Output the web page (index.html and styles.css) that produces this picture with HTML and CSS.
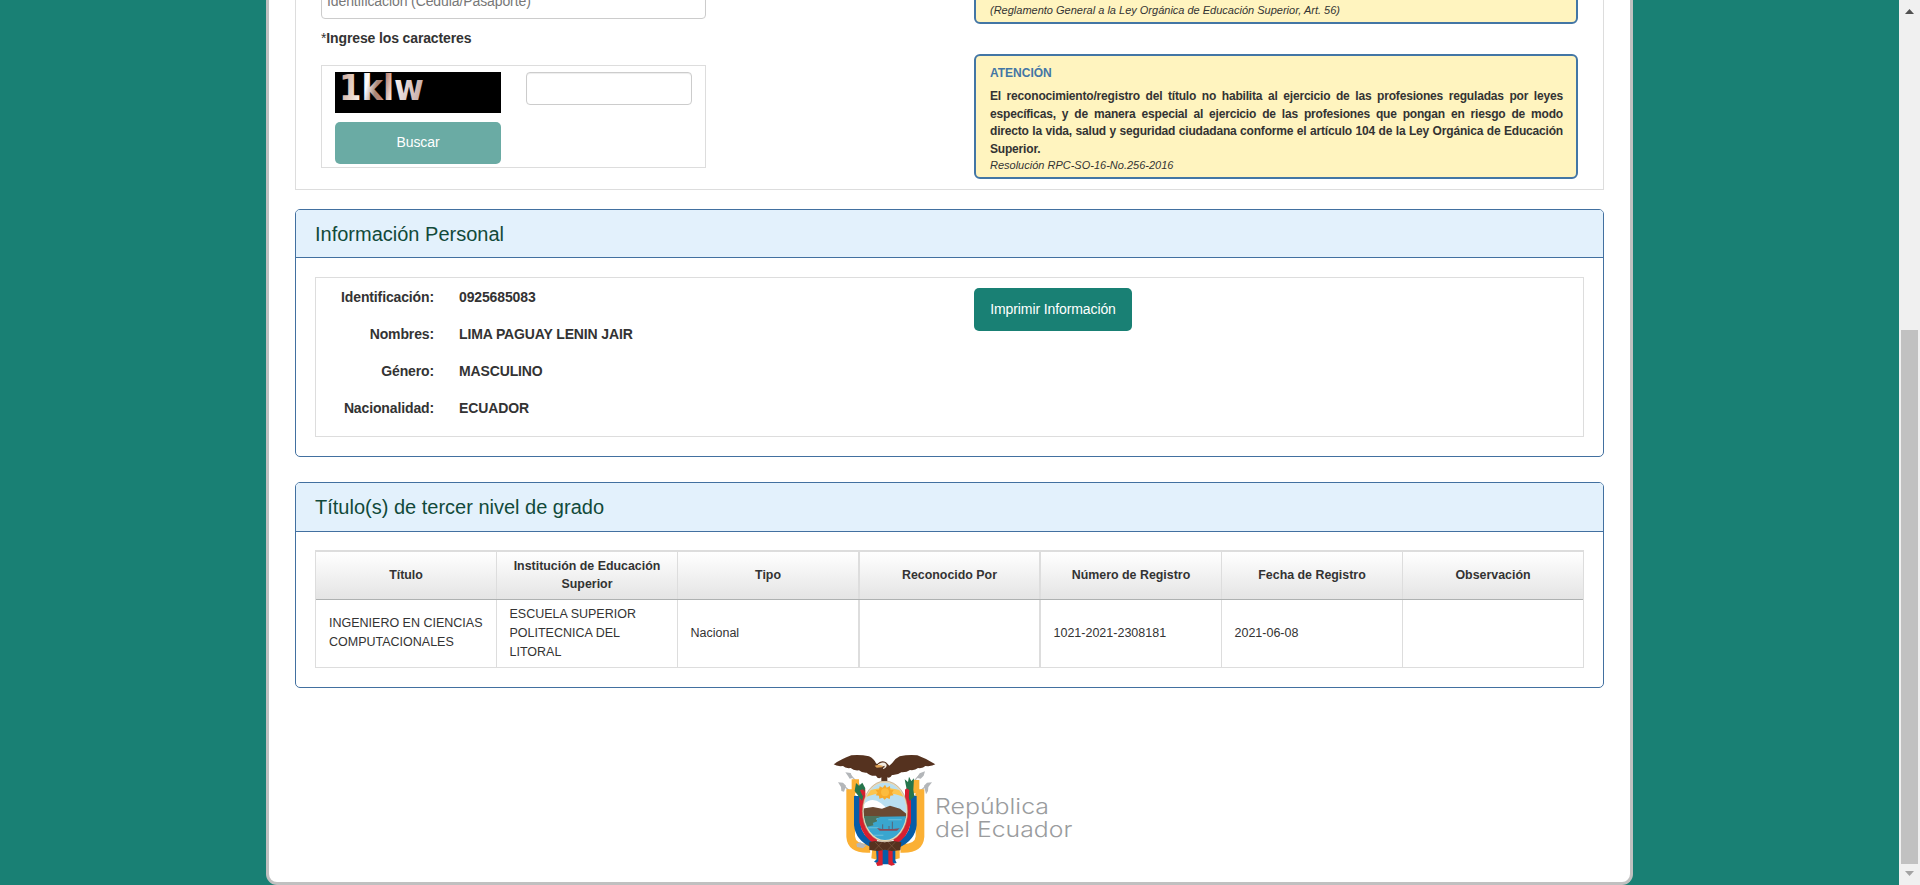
FILE: index.html
```html
<!DOCTYPE html>
<html lang="es">
<head>
<meta charset="utf-8">
<title>Consulta de Títulos</title>
<link rel="stylesheet" href="styles.css">
</head>
<body>
<div class="page">
<main class="container">
  <section class="search">
    <div class="form">
      <input class="field id-field" type="text" placeholder="Identificación (Cédula/Pasaporte)">
      <label class="form-label"><span>*</span>Ingrese los caracteres</label>
      <div class="captcha">
        <div class="captcha-left">
          <svg class="captcha-img" viewBox="0 0 166 41">
            <defs><linearGradient id="ink" gradientUnits="userSpaceOnUse" x1="6" y1="0" x2="88" y2="20">
              <stop offset="0" stop-color="#c9a699"/><stop offset=".2" stop-color="#ead8cf"/><stop offset=".33" stop-color="#fffdfc"/><stop offset=".45" stop-color="#a98778"/><stop offset=".53" stop-color="#bd8474"/><stop offset=".66" stop-color="#f6efed"/><stop offset="1" stop-color="#c5aaa5"/>
            </linearGradient></defs>
            <rect width="166" height="41" fill="#000"/>
            <text x="4" y="28" textLength="85" lengthAdjust="spacingAndGlyphs" fill="url(#ink)">1klw</text>
          </svg>
          <button class="btn btn-muted">Buscar</button>
        </div>
        <input class="field captcha-field" type="text">
      </div>
    </div>
    <div class="notices">
      <div class="notice notice-first"><em>(Reglamento General a la Ley Orgánica de Educación Superior, Art. 56)</em></div>
      <div class="notice">
        <h4>ATENCIÓN</h4>
        <p><span>El reconocimiento/registro del título no habilita al ejercicio de las profesiones reguladas por leyes</span> <span>específicas, y de manera especial al ejercicio de las profesiones que pongan en riesgo de modo</span> <span>directo la vida, salud y seguridad ciudadana conforme el artículo 104 de la Ley Orgánica de Educación</span> <span>Superior.</span></p>
        <em>Resolución RPC-SO-16-No.256-2016</em>
      </div>
    </div>
  </section>

  <section class="panel personal">
    <h3>Información Personal</h3>
    <div class="personal-box">
      <dl>
        <dt>Identificación:</dt><dd>0925685083</dd>
        <dt>Nombres:</dt><dd>LIMA PAGUAY LENIN JAIR</dd>
        <dt>Género:</dt><dd>MASCULINO</dd>
        <dt>Nacionalidad:</dt><dd>ECUADOR</dd>
      </dl>
      <button class="btn btn-print">Imprimir Información</button>
    </div>
  </section>

  <section class="panel degrees">
    <h3>Título(s) de tercer nivel de grado</h3>
    <div class="table">
      <div class="row head">
        <div>Título</div><div>Institución de Educación Superior</div><div>Tipo</div><div>Reconocido Por</div><div>Número de Registro</div><div>Fecha de Registro</div><div>Observación</div>
      </div>
      <div class="row">
        <div>INGENIERO EN CIENCIAS COMPUTACIONALES</div><div>ESCUELA SUPERIOR POLITECNICA DEL LITORAL</div><div>Nacional</div><div></div><div>1021-2021-2308181</div><div>2021-06-08</div><div></div>
      </div>
    </div>
  </section>

  <footer>
    <svg class="logo" viewBox="0 0 810 405">
      <!-- flag poles -->
      <g stroke="#b9bbbd" stroke-width="4" fill="#b3b6b9">
        <path d="M65 132l62 54M90 104l42 45M325 132l-62 54M300 104l-42 45"/>
        <path stroke="none" d="M54 127l15 1 9 9-6 18-8-2-1-12zM76 97l16 2 6 15-9 2-5-8zM336 127l-15 1-9 9 6 26 6-10 1-12zM315 94l-16 6-9 13 12 3 9-9z"/>
      </g>
      <!-- tricolour drapes -->
      <g fill="none">
        <path stroke="#fbb034" stroke-width="26" d="M92 148V290Q95 328 150 325M300 148V290Q297 328 242 325"/>
        <path stroke="#fbb034" stroke-width="22" d="M106 118V160M287 120V160"/>
        <path stroke="#075da8" stroke-width="20" d="M112 168V255Q116 295 160 314M280 168V255Q276 295 232 314"/>
        <path stroke="#d8202f" stroke-width="18" d="M127 148V246Q138 290 170 304M264 148V246Q254 290 222 304"/>
      </g>
      <path fill="#fbb034" d="M157 325h82v30l-20 5h-45l-20-5z"/>
      <path fill="#075da8" d="M168 328h58v33l4 8-18 4h-32l-18-8 8-7z"/>
      <path fill="#d8202f" d="M175 328h13v48l-16 2-4-8 7-6zM205 328h13v38l7 8-11 3-9-4z"/>
      <path fill="#26754c" d="M104 153l4-24 9 8 10-9 9 17-4 14-6 23zM254 118l10 8 3-16 7 13 8-8-2 34 3 20-14 14-8-30z"/>
      <path fill="#d8202f" d="M120 151l9-3 7 12-8 8zM260 145l8 5-2 24-10-14z"/>
      <path fill="#55321f" d="M148 306l18-3 28 4 26-4 24 4-3 24-26 2-20-4-22 4-25-3z"/>
      <path stroke="#7c5740" stroke-width="2" d="M165 306l24 25M187 306l-24 25M204 306l24 25M226 306l-24 25"/>
      <!-- oval landscape -->
      <clipPath id="oval"><ellipse cx="195" cy="214" rx="64" ry="86"/></clipPath>
      <ellipse cx="195" cy="214" rx="68" ry="91" fill="#e8d9b8" stroke="#a58762" stroke-width="1.500"/>
      <g clip-path="url(#oval)">
        <rect x="125" y="122" width="140" height="186" fill="#b9dff0"/>
        <path fill="none" stroke="#fcc650" stroke-width="16" d="M130 166q65-28 130 0"/>
        <path fill="#f7a928" d="M195 134l5 9 10-5 1 11 10 1-5 8 5 8-10 1-2 10-9-4-6 6-6-6-10 3-1-9-10-1 6-8-6-8 10-1 2-10 9 4z"/>
        <circle cx="195" cy="157" r="12" fill="#fcbc3e"/>
        <path fill="#fff" d="M129 195q25-26 53-6l24 20h-77z"/>
        <path fill="#6a4932" d="M125 206l34-5 27 5 24-9 30 9 25 20v7H125z"/>
        <path fill="#4c735e" d="M125 228h60l-16 8 4 10-13 8 4 8h-39z"/>
        <path fill="#3aa6cf" d="M125 263l37-7-4-7 14-5-3-8 14-6 82-1v79H125z"/>
        <path fill="#6dc0da" d="M145 262h30v3h-30zM205 238h40v3h-40zM145 284h45v3h-45z"/>
        <path fill="#884b5a" d="M171 264l14 3h34l20-2-8 7h-52z"/>
        <path stroke="#55647a" stroke-width="3" d="M188 253v14M217 245v23M207 258v10"/>
      </g>
      <!-- condor -->
      <path fill="#55321f" d="M41 73Q62 58 94 46Q120 43 147 49Q162 56 168 70L178 78H207L216 70Q224 56 239 49Q266 43 292 46Q324 58 346 73Q336 80 316 78Q309 86 294 84Q285 92 270 90Q260 98 244 97Q233 106 216 105Q210 116 202 112L202 123H184L184 112Q174 119 168 107Q151 109 140 98Q125 99 117 91Q101 93 92 84Q76 86 69 78Q50 80 41 73Z"/>
      <path fill="#55321f" d="M170 74q12-16 28-7l10 10 5 30h-26z"/>
      <path fill="#f2ece2" d="M174 73l10-5q14-2 16 8-1 10-11 11v-3q6-2 5-7-10 4-20 2z"/>
      <path fill="#e1a458" d="M164 77l12-3 12 3-2 5-16 1z"/>
      <path fill="#b5b8bb" d="M109 311l12-4 18 9-10 9-18-4z"/>
      <g class="logo-text">
        <text x="345" y="223" textLength="342" lengthAdjust="spacingAndGlyphs">República</text>
        <text x="345" y="291" textLength="412" lengthAdjust="spacingAndGlyphs">del Ecuador</text>
      </g>
    </svg>
  </footer>
</main>
<aside class="scrollbar">
  <svg viewBox="0 0 9 5"><path fill="#505050" d="M0 5L4.500 0L9 5z"/></svg>
  <div class="thumb"></div>
  <svg viewBox="0 0 9 5"><path fill="#a3a3a3" d="M0 0L4.500 5L9 0z"/></svg>
</aside>
</div>
</body>
</html>
```
FILE: styles.css
```css
* { box-sizing: border-box; }
body { margin: 0; overflow: hidden; background: #198074; color: #333; font: 14px/20px "Liberation Sans", Arial, sans-serif; }
h3, h4, p, dl, dd { margin: 0; }
.page { display: flex; height: 885px; }
.container { width: 1367px; margin-left: 266px; padding: 0 26px; background: #fff; border: 3px solid #c0c0c0; border-top: 0; border-radius: 0 0 11px 11px; }
.search { display: flex; height: 190px; border: 1px solid #ddd; border-top: 0; overflow: hidden; }
.form { width: 385px; margin-left: 25px; flex: none; }
.field { display: block; border: 1px solid #ccc; border-radius: 4px; background: #fff; box-shadow: inset 0 1px 1px rgba(0,0,0,.075); font: 14px "Liberation Sans", Arial, sans-serif; padding: 6px; outline: 0; }
.id-field { width: 385px; height: 34px; margin-top: -15px; padding: 5px 5px 7px; letter-spacing: -.1px; }
.id-field::placeholder { color: #777; opacity: 1; }
.form-label { display: block; margin: 9px 0 17px; font-weight: bold; letter-spacing: -.13px; }
.form-label span { font-weight: normal; }
.captcha { display: flex; justify-content: space-between; height: 103px; border: 1px solid #ddd; padding: 6px 13px; }
.captcha-left { width: 166px; }
.captcha-img { display: block; width: 166px; height: 41px; margin-bottom: 9px; overflow: visible; font: bold 35px "DejaVu Sans", sans-serif; }
.captcha-field { width: 166px; height: 33px; }
.btn { display: block; height: 43px; padding: 0 0 2px; border: 0; border-radius: 5px; background: #198074; color: #fff; font: 14px "Liberation Sans", Arial, sans-serif; letter-spacing: -.1px; }
.btn-print { width: 158px; }
.btn-muted { width: 166px; height: 42px; background: #6aaba4; }
.notices { width: 604px; margin-left: 268px; }
.notice { height: 125px; padding: 8px 13px 0 14px; border: 2px solid #4376a5; border-radius: 6px; background: #fff4bf; font-size: 12px; line-height: 17.5px; }
.notice-first { height: 44px; margin: -20px 0 30px; padding-top: 21px; }
.notice h4 { font-size: 12px; line-height: 18px; color: #4376a5; margin-bottom: 6px; }
.notice p { font-weight: bold; letter-spacing: -.18px; }
.notice p span { display: block; text-align: justify; text-align-last: justify; }
.notice p span:last-child { text-align-last: left; }
.notice em { display: block; font-size: 11px; line-height: 15px; }
.panel { border: 1px solid #4270a0; border-radius: 5px; background: #fff; }
.panel h3 { height: 48px; padding: 13px 19px 0; border-bottom: 1px solid #4270a0; border-radius: 4px 4px 0 0; background: #e3f1fc; color: #114a3a; font-size: 20px; line-height: 22px; font-weight: normal; }
.personal { height: 248px; margin-top: 19px; }
.personal-box { display: flex; height: 160px; margin: 19px; border: 1px solid #ddd; padding-top: 10px; }
.personal dl { display: grid; grid-template-columns: 118px 1fr; grid-auto-rows: 37px; column-gap: 25px; width: 658px; margin-top: -1px; font-weight: bold; letter-spacing: -.13px; }
.personal dt { text-align: right; }
.degrees { height: 206px; margin-top: 25px; }
.degrees h3 { height: 49px; }
.table { margin: 18px 19px 0; border: solid #ddd; border-width: 2px 1px 1px; }
.row { display: grid; grid-template-columns: 180px 181px 181px 181px 182px 181px 1fr; height: 67px; font-size: 12.500px; line-height: 19px; }
.row div { display: flex; align-items: center; padding: 0 12px 1px 12.500px; border-left: 1px solid #ddd; }
.row div:first-child { border-left: 0; padding-left: 13px; padding-right: 8px; }
.row div:nth-child(4), .row div:nth-child(5) { border-left-width: 2px; }
.row.head { height: 48px; border-bottom: 1px solid #aeb1b1; background: linear-gradient(#fff, #e4e4e4); font-size: 12.400px; font-weight: bold; line-height: 18px; }
.row.head div { justify-content: center; text-align: center; padding: 0 12px 2px; }
footer { display: flex; margin: 52px 0 0 525px; }
.logo { width: 270px; height: 135px; }
.logo-text { font: 300 66px Inter, sans-serif; fill: #9a9c9e; }
.scrollbar { display: flex; flex-direction: column; align-items: center; width: 21px; margin-left: auto; padding: 9px 0; background: #f0f0f0; }
.scrollbar svg { width: 9px; height: 5px; }
.thumb { width: 17px; height: 534px; margin: 316px 0 7px; background: #c1c1c1; }
```
